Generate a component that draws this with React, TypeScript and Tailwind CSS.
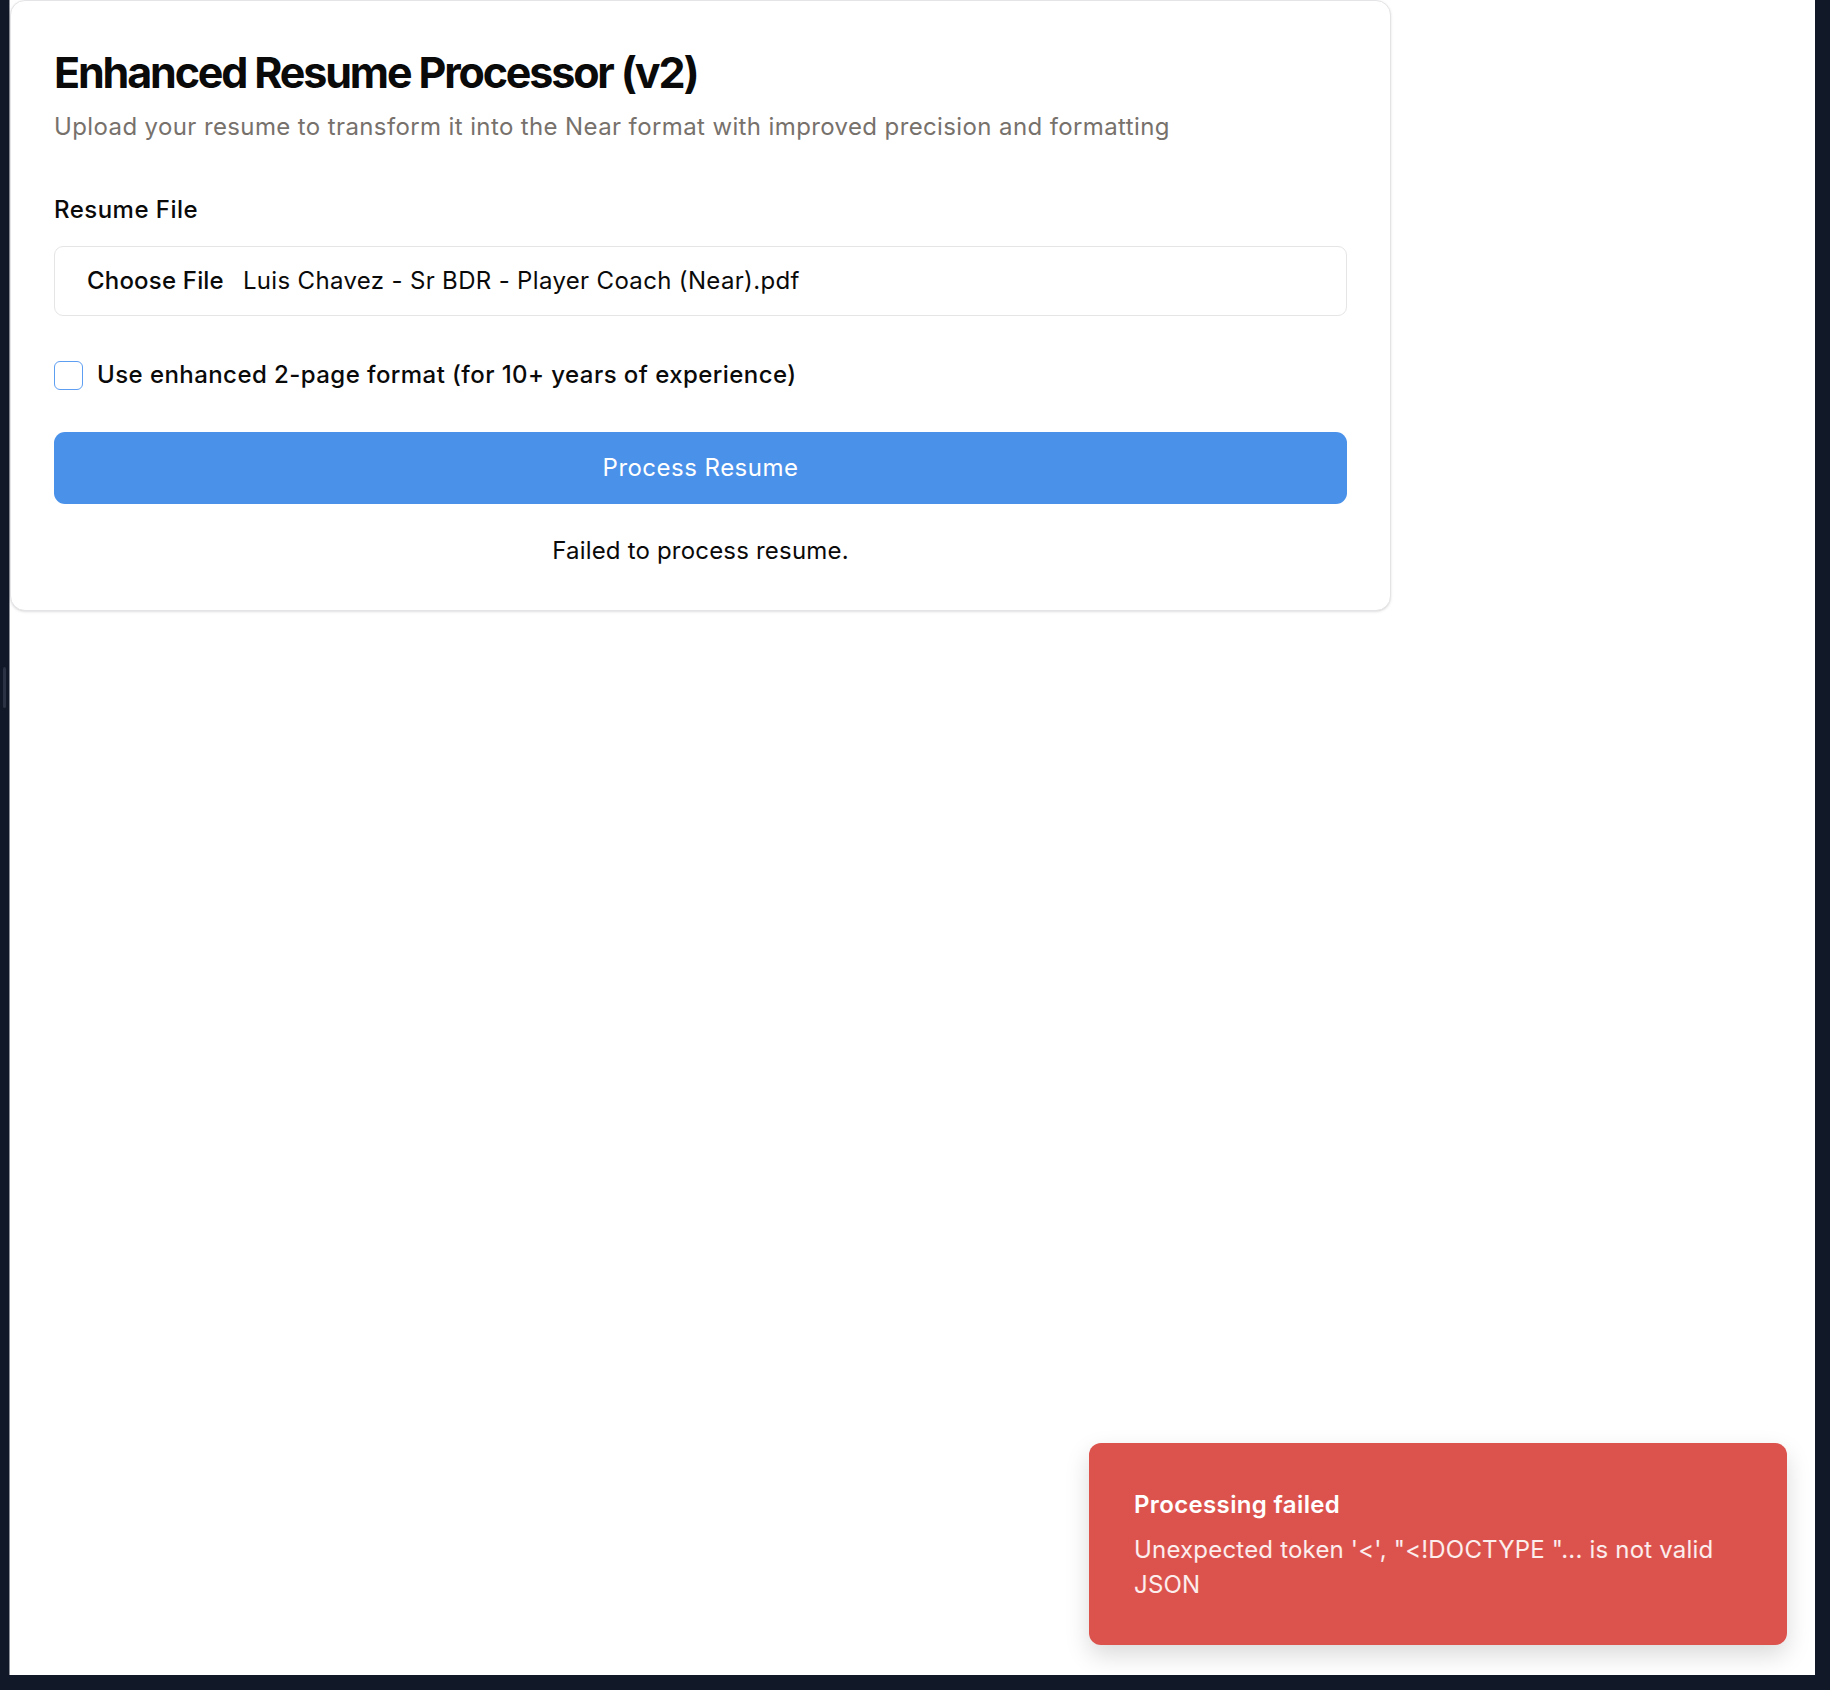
import { useState } from "react";

const FONT = "font-['Inter','Liberation_Sans',sans-serif]";

function Toast({ title, message }: { title: string; message: string }) {
  return (
    <div className="absolute bottom-[30px] right-[28px] w-[698px] rounded-[12px] bg-[#dc534e] px-[45px] pt-[44px] pb-[43px] shadow-[0_10px_25px_rgba(0,0,0,0.15)]">
      <p className="text-[24px] leading-[36px] font-semibold tracking-[0.015em] text-white">{title}</p>
      <p className="mt-[9px] text-[24px] leading-[35px] text-white/90">{message}</p>
    </div>
  );
}

export default function App() {
  const [twoPage, setTwoPage] = useState(false);

  return (
    <div className={`flex h-[1690px] w-full bg-[#111827] tracking-[0.012em] ${FONT}`}>
      {/* window gutter with the little scroll thumb */}
      <div className="w-[9px] shrink-0 pt-[667px]">
        <div className="ml-[3px] h-[41px] w-[3px] rounded-full bg-[#2a3243]" />
      </div>

      <div className="relative mr-[15px] h-[1675px] flex-1 border-l border-[#8d9099] bg-white">
        <div className="w-[1381px] rounded-[15px] border border-[#e4e4e7] bg-white px-[43px] pt-[45px] pb-[41px] shadow-sm">
          <h1 className="text-[43px] leading-[53px] font-bold tracking-[-0.05em] text-[#0a0a0a]">
            Enhanced Resume Processor (v2)
          </h1>
          <p className="mt-[10px] text-[24px] leading-[36px] tracking-[0.016em] text-[#77716c]">
            Upload your resume to transform it into the Near format with improved precision and formatting
          </p>

          <label className="mt-[47px] block text-[24px] leading-[36px] font-medium tracking-[0.02em] text-[#0a0a0a]">
            Resume File
          </label>
          <div className="mt-[18px] flex h-[70px] items-center gap-[19px] rounded-[9px] border border-[#e5e5e5] px-[32px] text-[24px] leading-[36px] text-[#0a0a0a]">
            <span className="font-medium">Choose File</span>
            <span className="tracking-[0.014em]">Luis Chavez - Sr BDR - Player Coach (Near).pdf</span>
          </div>

          <label className="mt-[41px] flex h-[36px] items-center gap-[14px] text-[24px] leading-[36px] font-medium tracking-[0.018em] text-[#0a0a0a]">
            <button
              type="button"
              onClick={() => setTwoPage(!twoPage)}
              className={`h-[29px] w-[29px] shrink-0 rounded-[6px] border border-[#5d9ef2] ${twoPage ? "bg-[#4a91ea]" : "bg-white"}`}
            />
            Use enhanced 2-page format (for 10+ years of experience)
          </label>

          <button
            type="button"
            className="mt-[39px] flex h-[72px] w-full items-center justify-center rounded-[11px] bg-[#4a91ea] text-[24px] leading-[36px] tracking-[0.02em] text-white"
          >
            Process Resume
          </button>

          <p className="mt-[29px] text-center text-[24px] leading-[36px] text-[#0a0a0a]">Failed to process resume.</p>
        </div>

        <Toast title="Processing failed" message={`Unexpected token '<', "<!DOCTYPE "... is not valid JSON`} />
      </div>
    </div>
  );
}
